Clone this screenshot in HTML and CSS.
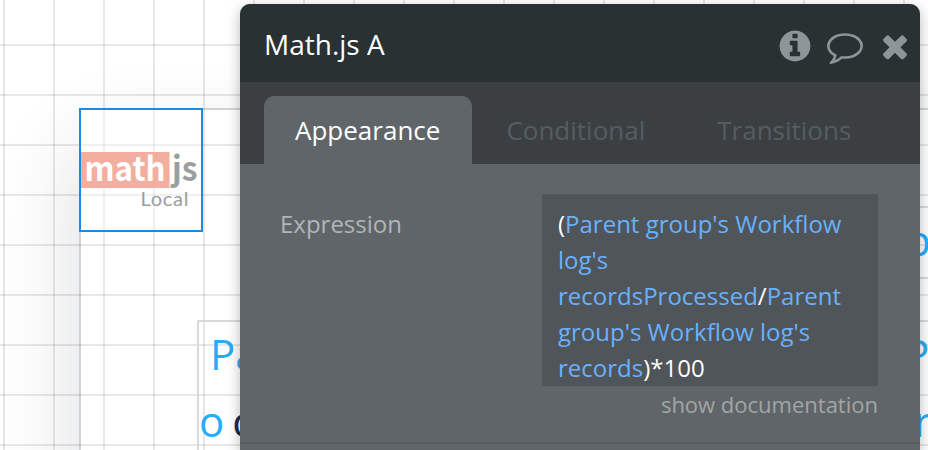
FILE: index.html
```html
<!DOCTYPE html>
<html lang="en">
<head>
    <meta charset="UTF-8">
    <meta name="viewport" content="width=device-width, initial-scale=1.0">
    <title>Math.js A</title>
    <link rel="stylesheet" href="styles.css">
</head>
<body>
    <div class="canvas">
        <div class="page"></div>
        <div class="grid"></div>

        <div class="element element-math">
            <svg class="math-logo" viewBox="0 0 120 120">
                <rect x="0" y="42" width="88.5" height="36" fill="#f2afa0"/>
                <text class="logo-name" x="3.5" y="70.5" textLength="81" lengthAdjust="spacingAndGlyphs" fill="#fff">math</text>
                <text class="logo-name" x="91" y="70.5" textLength="25.5" lengthAdjust="spacingAndGlyphs" fill="#9c9f9f">js</text>
                <text class="logo-local" x="59.5" y="96" textLength="48" fill="#999d9d">Local</text>
            </svg>
        </div>

        <div class="element element-header"></div>
        <div class="element element-group"></div>

        <div class="label label-parent">Pa</div>
        <div class="label label-count">o <span class="dark">c</span></div>
        <div class="label label-right-top">p</div>
        <div class="label label-right-mid">P</div>
        <div class="label label-right-bottom">r</div>
    </div>

    <div class="panel">
        <div class="panel-header">
            <span class="panel-title">Math.js A</span>
            <div class="panel-icons">
                <svg class="icon" viewBox="0 0 1792 1792"><path d="M1152 1376v-160q0-14-9-23t-23-9h-96v-512q0-14-9-23t-23-9h-320q-14 0-23 9t-9 23v160q0 14 9 23t23 9h96v320h-96q-14 0-23 9t-9 23v160q0 14 9 23t23 9h448q14 0 23-9t9-23zm-128-896v-160q0-14-9-23t-23-9h-192q-14 0-23 9t-9 23v160q0 14 9 23t23 9h192q14 0 23-9t9-23zm640 416q0 209-103 385.5t-279.5 279.5-385.5 103-385.5-103-279.5-279.5-103-385.5 103-385.5 279.5-279.5 385.5-103 385.5 103 279.5 279.5 103 385.5z"/></svg>
                <svg class="icon" viewBox="0 0 1792 1792"><path d="M896 384q-204 0-381.5 69.5t-282 187.5-104.5 255q0 112 71.5 213.5t201.5 175.5l87 50-27 96q-24 91-70 172 152-63 275-171l43-38 57 6q69 8 130 8 204 0 381.5-69.5t282-187.5 104.5-255-104.5-255-282-187.5-381.5-69.5zm896 512q0 174-120 321.5t-326 233-450 85.5q-70 0-145-8-198 175-460 242-49 14-114 22h-5q-15 0-27-10.5t-16-27.5v-1q-3-4-.5-12t2-10 4.5-9.5l6-9 7-8.5 8-9q7-8 31-34.5t34.5-38 31-39.5 32.5-51 27-59 26-76q-157-89-247.5-220t-90.5-281q0-174 120-321.5t326-233 450-85.5 450 85.5 326 233 120 321.5z"/></svg>
                <svg class="icon" viewBox="0 0 1792 1792"><path d="M1490 1322q0 40-28 68l-136 136q-28 28-68 28t-68-28l-294-294-294 294q-28 28-68 28t-68-28l-136-136q-28-28-28-68t28-68l294-294-294-294q-28-28-28-68t28-68l136-136q28-28 68-28t68 28l294 294 294-294q28-28 68-28t68 28l136 136q28 28 28 68t-28 68l-294 294 294 294q28 28 28 68z"/></svg>
            </div>
        </div>

        <div class="tabs">
            <div class="tab active">Appearance</div>
            <div class="tab">Conditional</div>
            <div class="tab">Transitions</div>
        </div>

        <div class="panel-body">
            <div class="property">
                <div class="property-name">Expression</div>
                <div class="property-value">
                    <div class="composer">(<span class="dynamic">Parent group's Workflow log's recordsProcessed</span>/<span class="dynamic">Parent group's Workflow log's records</span>)*100</div>
                    <a class="doc-link">show documentation</a>
                </div>
            </div>
        </div>
    </div>
</body>
</html>
```

FILE: styles.css
```css
body {
    margin: 0;
    width: 928px;
    height: 450px;
    overflow: hidden;
    position: relative;
    background: #fff;
    font-family: 'Open Sans', 'Noto Sans', sans-serif;
}

/* Editor canvas */
.canvas {
    position: relative;
    width: 928px;
    height: 450px;
    overflow: hidden;
}

.page {
    position: absolute;
    top: 108px;
    left: 79px;
    width: 1200px;
    height: 900px;
    box-sizing: border-box;
    border: 2px solid #d2d2d3;
    background: #fff;
    box-shadow: 0 40px 80px rgba(40, 45, 60, 0.16);
}

.grid {
    position: absolute;
    inset: 0;
    background-image:
        linear-gradient(to right, rgba(0, 0, 0, 0.095) 2px, transparent 2px),
        linear-gradient(to bottom, rgba(0, 0, 0, 0.095) 2px, transparent 2px);
    background-size: 50px 50px;
    background-position: 3px 44px;
}

.element {
    position: absolute;
    box-sizing: border-box;
    border: 2px solid #dadada;
}

.element-math {
    top: 108px;
    left: 79px;
    width: 124px;
    height: 124px;
    border-color: #1b8ae6;
    background: rgba(255, 255, 255, 0.4);
}

.math-logo {
    display: block;
    width: 120px;
    height: 120px;
}

.logo-name {
    font-family: 'Noto Sans CJK SC', sans-serif;
    font-weight: 700;
    font-size: 34px;
}

.logo-local {
    font-family: Lato, sans-serif;
    font-size: 20px;
}

.element-header {
    top: 206px;
    left: 500px;
    width: 600px;
    height: 73px;
}

.element-group {
    top: 320px;
    left: 197px;
    width: 900px;
    height: 300px;
}

.label {
    position: absolute;
    font-size: 42px;
    line-height: 56px;
    white-space: nowrap;
    color: #29acf7;
}

.label .dark {
    margin-left: -3px;
    color: #1a2b52;
}

.label-parent {
    top: 326px;
    left: 210px;
}

.label-count {
    top: 393px;
    left: 199px;
}

.label-right-top {
    top: 212px;
    left: 905px;
}

.label-right-mid {
    top: 326px;
    left: 904px;
}

.label-right-bottom {
    top: 393px;
    left: 914px;
}

/* Property editor */
.panel {
    position: absolute;
    top: 4px;
    left: 240px;
    width: 680px;
    height: 446px;
    border-radius: 10px 10px 0 0;
    overflow: hidden;
    background: #5f6568;
    box-shadow: 0 4px 14px rgba(0, 0, 0, 0.28);
}

.panel-header {
    display: flex;
    align-items: center;
    justify-content: space-between;
    height: 78px;
    padding: 2px 7px 0 24px;
    box-sizing: border-box;
    background: #293133;
}

.panel-title {
    font-size: 28px;
    line-height: 38px;
    color: #fff;
}

.panel-icons {
    display: flex;
    gap: 14px;
    padding-top: 7px;
    height: 40px;
}

.icon {
    width: 36px;
    height: 36px;
    fill: #8d9599;
}

.tabs {
    display: flex;
    gap: 3px;
    height: 82px;
    padding: 14px 24px 0;
    box-sizing: border-box;
    background: #3b3f42;
}

.tab {
    padding: 0 38px 0 31px;
    border-radius: 10px 10px 0 0;
    font-size: 26px;
    line-height: 69px;
    color: #555d61;
}

.tab.active {
    padding-right: 32px;
    background: #5f6568;
    color: #fff;
}

.panel-body {
    height: 280px;
    padding: 30px 42px 0 40px;
    box-sizing: border-box;
    border-bottom: 2px solid #565b5e;
}

.property {
    display: flex;
    justify-content: space-between;
}

.property-name {
    padding-top: 12px;
    font-size: 24px;
    line-height: 36px;
    color: #b0b5b7;
}

.property-value {
    display: flex;
    flex-direction: column;
    align-items: flex-end;
}

.composer {
    width: 336px;
    height: 192px;
    padding: 12px 16px 0;
    box-sizing: border-box;
    overflow: hidden;
    border-radius: 2px;
    background: #4f5558;
    font-size: 24px;
    line-height: 36px;
    color: #fff;
}

.dynamic {
    color: #69b1ff;
}

.doc-link {
    margin-top: 3px;
    font-size: 22px;
    line-height: 30px;
    color: #a3a5a6;
}
```
